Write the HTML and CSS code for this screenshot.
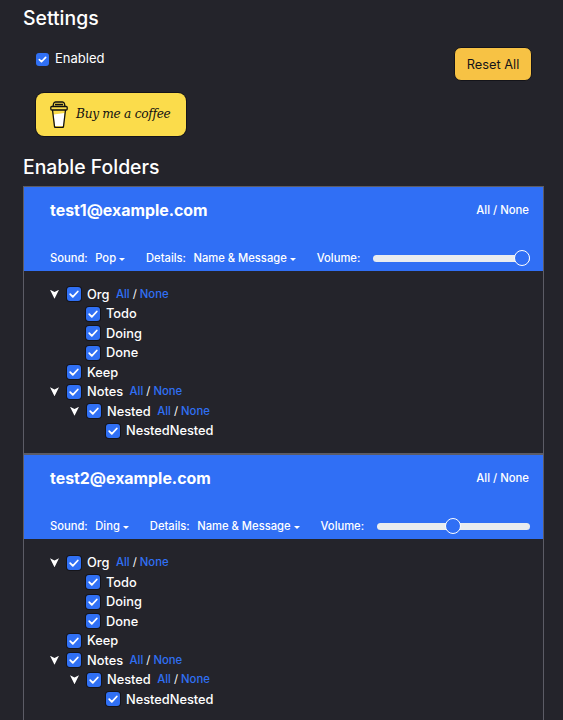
FILE: index.html
```html
<!DOCTYPE html>
<html lang="en">
<head>
<meta charset="utf-8">
<title>Settings</title>
<link rel="stylesheet" href="styles.css">
</head>
<body>
<main class="page">
  <h2 class="title">Settings</h2>
  <div class="top">
    <div class="top-left">
      <label class="enabled"><span class="cb small"><svg viewBox="0 0 14 14"><path d="M3.600 7.200l2.300 2.200 4.500-4.600"/></svg></span>Enabled</label>
      <a class="coffee">
        <svg class="cup" viewBox="0 0 18 27"><path class="cup-fill" d="M3.500 13.500 L14.500 12 L13.500 25 H5z"/><path class="cup-line" d="M2.500 9l2 16.500q.2 1 1 1h7q.8 0 1-1l2-16.500M.8 6.500q0-1 1-1h14.400q1 0 1 1v1.500q0 1-1 1H1.800q-1 0-1-1zM3 5.500l.5-2.500q.3-2 2-2h7q1.700 0 2 2l.5 2.500M5 3.500h8"/></svg>
        <span class="coffee-text">Buy me a coffee</span>
      </a>
    </div>
    <button class="reset">Reset All</button>
  </div>
  <h2 class="title folders">Enable Folders</h2>

  <section class="card">
    <header class="head">
      <div class="head-top"><span class="email">test1@example.com</span><span class="allnone">All / None</span></div>
      <div class="controls">
        <span class="lbl">Sound:</span><span class="drop">Pop</span>
        <span class="lbl">Details:</span><span class="drop">Name &amp; Message</span>
        <span class="lbl">Volume:</span><input class="vol" type="range" min="0" max="100" value="100">
      </div>
    </header>
    <ul class="tree">
      <li class="row"><span class="tw"></span><span class="cb"><svg viewBox="0 0 14 14"><path d="M3.200 7.200l2.600 2.600 5-5.300"/></svg></span><span>Org</span><span class="links"><a>All</a> <b>/</b> <a>None</a></span></li>
      <li class="row l1"><span class="cb"><svg viewBox="0 0 14 14"><path d="M3.200 7.200l2.600 2.600 5-5.300"/></svg></span><span>Todo</span></li>
      <li class="row l1"><span class="cb"><svg viewBox="0 0 14 14"><path d="M3.200 7.200l2.600 2.600 5-5.300"/></svg></span><span>Doing</span></li>
      <li class="row l1"><span class="cb"><svg viewBox="0 0 14 14"><path d="M3.200 7.200l2.600 2.600 5-5.300"/></svg></span><span>Done</span></li>
      <li class="row l0"><span class="cb"><svg viewBox="0 0 14 14"><path d="M3.200 7.200l2.600 2.600 5-5.300"/></svg></span><span>Keep</span></li>
      <li class="row"><span class="tw"></span><span class="cb"><svg viewBox="0 0 14 14"><path d="M3.200 7.200l2.600 2.600 5-5.300"/></svg></span><span>Notes</span><span class="links"><a>All</a> <b>/</b> <a>None</a></span></li>
      <li class="row n1"><span class="tw"></span><span class="cb"><svg viewBox="0 0 14 14"><path d="M3.200 7.200l2.600 2.600 5-5.300"/></svg></span><span>Nested</span><span class="links"><a>All</a> <b>/</b> <a>None</a></span></li>
      <li class="row l2"><span class="cb"><svg viewBox="0 0 14 14"><path d="M3.200 7.200l2.600 2.600 5-5.300"/></svg></span><span>NestedNested</span></li>
    </ul>
  </section>

  <section class="card">
    <header class="head">
      <div class="head-top"><span class="email">test2@example.com</span><span class="allnone">All / None</span></div>
      <div class="controls">
        <span class="lbl">Sound:</span><span class="drop">Ding</span>
        <span class="lbl">Details:</span><span class="drop">Name &amp; Message</span>
        <span class="lbl">Volume:</span><input class="vol" type="range" min="0" max="100" value="50">
      </div>
    </header>
    <ul class="tree">
      <li class="row"><span class="tw"></span><span class="cb"><svg viewBox="0 0 14 14"><path d="M3.200 7.200l2.600 2.600 5-5.300"/></svg></span><span>Org</span><span class="links"><a>All</a> <b>/</b> <a>None</a></span></li>
      <li class="row l1"><span class="cb"><svg viewBox="0 0 14 14"><path d="M3.200 7.200l2.600 2.600 5-5.300"/></svg></span><span>Todo</span></li>
      <li class="row l1"><span class="cb"><svg viewBox="0 0 14 14"><path d="M3.200 7.200l2.600 2.600 5-5.300"/></svg></span><span>Doing</span></li>
      <li class="row l1"><span class="cb"><svg viewBox="0 0 14 14"><path d="M3.200 7.200l2.600 2.600 5-5.300"/></svg></span><span>Done</span></li>
      <li class="row l0"><span class="cb"><svg viewBox="0 0 14 14"><path d="M3.200 7.200l2.600 2.600 5-5.300"/></svg></span><span>Keep</span></li>
      <li class="row"><span class="tw"></span><span class="cb"><svg viewBox="0 0 14 14"><path d="M3.200 7.200l2.600 2.600 5-5.300"/></svg></span><span>Notes</span><span class="links"><a>All</a> <b>/</b> <a>None</a></span></li>
      <li class="row n1"><span class="tw"></span><span class="cb"><svg viewBox="0 0 14 14"><path d="M3.200 7.200l2.600 2.600 5-5.300"/></svg></span><span>Nested</span><span class="links"><a>All</a> <b>/</b> <a>None</a></span></li>
      <li class="row l2"><span class="cb"><svg viewBox="0 0 14 14"><path d="M3.200 7.200l2.600 2.600 5-5.300"/></svg></span><span>NestedNested</span></li>
    </ul>
  </section>
</main>
</body>
</html>
```
FILE: styles.css
```css
* { box-sizing: border-box; }
html, body { margin: 0; height: 720px; overflow: hidden; }
body { background: #24242b; color: #fff; font-family: Inter, "Liberation Sans", sans-serif; font-size: 13px; line-height: 19.500px; }
.page { padding: 6px 19px 0 23px; }
.title { margin: 0; font-size: 19.400px; line-height: 24px; font-weight: 500; }
.top { display: flex; justify-content: space-between; padding: 19px 12px 0 13px; }
.top-left { display: flex; flex-direction: column; gap: 24px; }
.enabled { display: flex; align-items: center; gap: 6px; height: 20px; }
.cb { width: 14px; height: 14px; flex: none; border-radius: 3px; background: #3070f4; display: block; box-shadow: 0 0 0 1px #14141a; }
.cb.small { width: 13px; height: 13px; box-shadow: none; }
.cb svg { display: block; width: 100%; height: 100%; fill: none; stroke: #fff; stroke-width: 1.800; stroke-linecap: round; stroke-linejoin: round; }
.coffee { width: 150px; height: 43px; background: #fbdc4b; border-radius: 8px; box-shadow: 0 0 0 1px #14141a; display: flex; align-items: center; gap: 8px; padding-left: 14px; color: #111; }
.cup { width: 18px; height: 27px; flex: none; }
.cup-fill { fill: #fff; }
.cup-line { fill: none; stroke: #111; stroke-width: 1.300; stroke-linejoin: round; }
.coffee-text { font-family: "DejaVu Serif", serif; font-style: italic; font-size: 12.200px; white-space: nowrap; letter-spacing: -0.300px; }
.reset { height: 34px; width: 78px; margin-top: -2px; border: 1px solid #14141a; border-radius: 7px; background: #f7c244; color: #14141a; font: 400 12.800px Inter, "Liberation Sans", sans-serif; padding: 0; }
.folders { margin-top: 19px; }
.card { border: 1px solid #5c5c66; border-width: 1px 1px 0 1px; margin-top: 7px; }
.card + .card { margin-top: 0; border-top-width: 2px; }
.head { background: #306ff5; height: 84px; padding: 14px 13px 0 26px; display: flex; flex-direction: column; justify-content: space-between; }
.head-top { display: flex; justify-content: space-between; align-items: center; height: 19px; margin-right: 1px; }
.email { font-size: 15.900px; font-weight: 650; }
.allnone { font-size: 11.300px; font-weight: 500; }
.controls { display: flex; align-items: center; height: 26px; font-size: 11.200px; font-weight: 500; }
.lbl { margin: 2px 7.500px 0 0; }
.drop { margin: 2px 21px 0 0; display: flex; align-items: center; }
.drop::after { content: ""; margin-left: 3px; border: 3.500px solid transparent; border-top-color: #fff; border-bottom-width: 0; }
.vol { appearance: none; -webkit-appearance: none; flex: 1; min-width: 0; height: 16px; margin: 0 0 0 5px; background: transparent; }
.vol::-webkit-slider-runnable-track { height: 7px; border-radius: 4px; background: #e9ecef; }
.vol::-webkit-slider-thumb { -webkit-appearance: none; width: 16px; height: 16px; margin-top: -4.500px; border-radius: 50%; background: #306ff5; border: 1.500px solid #fff; }
.tree { list-style: none; margin: 0; height: 182px; padding: 13.500px 0 0 26px; }
.card + .card .tree { padding-top: 14px; }
.row { display: flex; align-items: center; height: 19.500px; font-size: 12.800px; font-weight: 450; gap: 6px; white-space: nowrap; }
.tw { width: 9px; height: 9px; flex: none; margin-right: 2px; background: #fff; clip-path: polygon(0 0, 50% 25%, 100% 0, 50% 100%); }
.row.l0 { padding-left: 17px; }
.row.l1 { padding-left: 36px; }
.row.n1 { padding-left: 20px; }
.row.l2 { padding-left: 56px; }
.links { margin-left: 0.500px; font-size: 11.300px; }
.links a { color: #3070f4; }
.links b { font-weight: 400; color: #fff; }
```
